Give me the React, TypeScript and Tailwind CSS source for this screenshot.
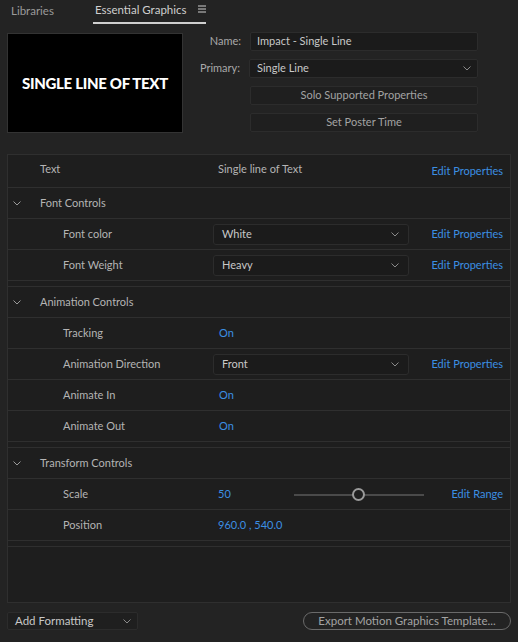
import React from 'react';

const Chevron = ({ className = '' }: { className?: string }) => (
  <svg width="8" height="5" viewBox="0 0 8 5" className={className}>
    <path d="M0.5 0.5 L4 4 L7.5 0.5" fill="none" stroke="currentColor" strokeWidth="1" />
  </svg>
);

const Select = ({ value, className = '' }: { value: string; className?: string }) => (
  <div
    className={`flex items-center justify-between h-[21px] rounded-[3px] border border-[#2c2c2c] bg-[#1b1b1b] pl-[8px] pr-[9px] text-[#c8c8c8] ${className}`}
  >
    <span>{value}</span>
    <Chevron className="text-[#8a8a8a]" />
  </div>
);

const EditLink = ({ label = 'Edit Properties' }: { label?: string }) => (
  <span className="ml-auto text-[#3c8fe3]">{label}</span>
);

const Row = ({ children, h = 'h-[31px]' }: { children: React.ReactNode; h?: string }) => (
  <div className={`flex items-center ${h} border-b border-[#2f2f2f] pr-[7px] pt-[1px]`}>{children}</div>
);

const Group = ({ label }: { label: string }) => (
  <Row>
    <Chevron className="ml-[5px] mr-[19px] text-[#9a9a9a]" />
    <span className="text-[#b4b4b4]">{label}</span>
  </Row>
);

const Prop = ({ label, children }: { label: string; children?: React.ReactNode }) => (
  <Row>
    <span className="w-[205px] pl-[55px] text-[#b4b4b4]">{label}</span>
    {children}
  </Row>
);

const Gap = () => <div className="h-[6px] border-b border-[#2f2f2f]" />;

export default function App() {
  return (
    <div className="w-[518px] h-[642px] bg-[#232323] font-['Lato',sans-serif] text-[11px] text-[#a9a9a9] flex flex-col">
      {/* tabs */}
      <div className="flex items-end h-[24px] pl-[11px]">
        <span className="pb-[5px] text-[#9a9a9a] text-[11.5px]">Libraries</span>
        <div className="ml-[39px] flex items-center gap-[11px] border-b-2 border-[#cfcfcf] pb-[4px] pl-[2px] text-[#cfcfcf] text-[11.5px]">
          <span>Essential Graphics</span>
          <svg width="8" height="8" viewBox="0 0 8 8">
            <path d="M0 1h8M0 4h8M0 7h8" stroke="#cfcfcf" strokeWidth="1" />
          </svg>
        </div>
      </div>

      {/* header */}
      <div className="flex mt-[9px] pl-[7px] pr-[40px]">
        <div className="w-[176px] h-[100px] bg-black border border-[#333] flex items-center justify-center">
          <span className="text-white font-black text-[15px] tracking-[-0.3px]">SINGLE LINE OF TEXT</span>
        </div>
        <div className="flex-1 ml-[24px] flex flex-col gap-[8px] -mt-[1px]">
          <div className="flex items-center">
            <span className="w-[43px] text-right pr-[9px]">Name:</span>
            <div className="flex-1 h-[19px] rounded-[2px] border border-[#2c2c2c] bg-[#1b1b1b] pl-[6px] flex items-center text-[#c8c8c8]">
              Impact - Single Line
            </div>
          </div>
          <div className="flex items-center">
            <span className="w-[43px] text-right pr-[9px] -ml-[10px] box-content">Primary:</span>
            <div className="flex-1 h-[19px] rounded-[2px] border border-[#2c2c2c] bg-[#1b1b1b] pl-[7px] pr-[6px] flex items-center justify-between text-[#c8c8c8]">
              <span>Single Line</span>
              <Chevron className="text-[#8a8a8a]" />
            </div>
          </div>
          <div className="ml-[43px] h-[19px] rounded-[2px] border border-[#2c2c2c] bg-[#1f1f1f] flex items-center justify-center text-[#a3a3a3]">
            Solo Supported Properties
          </div>
          <div className="ml-[43px] h-[19px] rounded-[2px] border border-[#2c2c2c] bg-[#1f1f1f] flex items-center justify-center text-[#a3a3a3]">
            Set Poster Time
          </div>
        </div>
      </div>

      {/* properties panel */}
      <div className="mx-[7px] mt-[21px] h-[449px] bg-[#1e1e1e] border border-[#2f2f2f] flex flex-col">
        <Row h="h-[33px]">
          <span className="w-[205px] pl-[32px] text-[#b4b4b4] -mt-[4px]">Text</span>
          <span className="text-[#b4b4b4] -mt-[4px] ml-[5px]">Single line of Text</span>
          <EditLink />
        </Row>
        <Group label="Font Controls" />
        <Prop label="Font color">
          <Select value="White" className="w-[196px]" />
          <EditLink />
        </Prop>
        <Prop label="Font Weight">
          <Select value="Heavy" className="w-[196px]" />
          <EditLink />
        </Prop>
        <Gap />
        <Group label="Animation Controls" />
        <Prop label="Tracking">
          <span className="ml-[6px] text-[#3c8fe3]">On</span>
        </Prop>
        <Prop label="Animation Direction">
          <Select value="Front" className="w-[196px]" />
          <EditLink />
        </Prop>
        <Prop label="Animate In">
          <span className="ml-[6px] text-[#3c8fe3]">On</span>
        </Prop>
        <Prop label="Animate Out">
          <span className="ml-[6px] text-[#3c8fe3]">On</span>
        </Prop>
        <Gap />
        <Group label="Transform Controls" />
        <Prop label="Scale">
          <span className="ml-[5px] w-[76px] text-[#3c8fe3]">50</span>
          <div className="relative w-[130px] h-[12px] flex items-center">
            <div className="w-full h-[2px] bg-[#4a4a4a]" />
            <div className="absolute left-[58px] w-[13px] h-[13px] rounded-full border-2 border-[#9a9a9a] bg-[#1e1e1e]" />
          </div>
          <EditLink label="Edit Range" />
        </Prop>
        <Prop label="Position">
          <span className="ml-[5px] text-[#3c8fe3]">960.0 , 540.0</span>
        </Prop>
        <Gap />
      </div>

      {/* footer */}
      <div className="flex items-center justify-between mx-[7px] mt-[9px]">
        <div className="w-[131px] h-[18px] rounded-[2px] border border-[#2c2c2c] bg-[#1f1f1f] pl-[7px] pr-[6px] flex items-center justify-between text-[#c8c8c8] text-[11.5px]">
          <span>Add Formatting</span>
          <Chevron className="text-[#8a8a8a]" />
        </div>
        <div className="w-[208px] h-[18px] rounded-full border border-[#6a6a6a] flex items-center justify-center text-[#a3a3a3] text-[11.5px]">
          Export Motion Graphics Template...
        </div>
      </div>
    </div>
  );
}
